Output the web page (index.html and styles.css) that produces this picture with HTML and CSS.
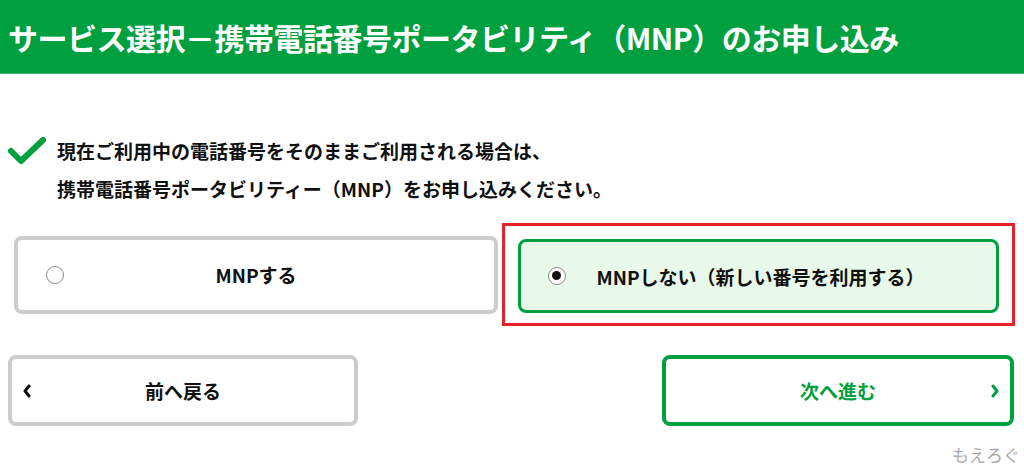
FILE: index.html
```html
<!DOCTYPE html>
<html lang="ja">
<head>
    <meta charset="UTF-8">
    <meta name="viewport" content="width=device-width, initial-scale=1.0">
    <title>サービス選択</title>
    <link rel="stylesheet" href="styles.css">
</head>
<body>
    <header class="page-head">
        <h1>サービス選択－携帯電話番号ポータビリティ（MNP）のお申し込み</h1>
    </header>

    <section class="notice">
        <svg class="notice-check" width="38" height="30" viewBox="0 0 38 30">
            <polyline points="3,14 13,24 35,3" fill="none" stroke="#00a040" stroke-width="6" stroke-linecap="round" stroke-linejoin="round"/>
        </svg>
        <p class="notice-text">
            現在ご利用中の電話番号をそのままご利用される場合は、<br>
            携帯電話番号ポータビリティー（MNP）をお申し込みください。
        </p>
    </section>

    <section class="options">
        <label class="option">
            <span class="radio"></span>
            <span class="option-label">MNPする</span>
        </label>
        <div class="highlight">
            <label class="option selected">
                <span class="radio checked"></span>
                <span class="option-label">MNPしない（新しい番号を利用する）</span>
            </label>
        </div>
    </section>

    <nav class="steps">
        <button class="step back">
            <svg class="chev" width="10" height="14" viewBox="0 0 10 14">
                <polyline points="7,2 3,7 7,12" fill="none" stroke="#111" stroke-width="3" stroke-linecap="round" stroke-linejoin="round"/>
            </svg>
            <span>前へ戻る</span>
        </button>
        <button class="step next">
            <span>次へ進む</span>
            <svg class="chev" width="10" height="14" viewBox="0 0 10 14">
                <polyline points="3,2 7,7 3,12" fill="none" stroke="#00a040" stroke-width="3" stroke-linecap="round" stroke-linejoin="round"/>
            </svg>
        </button>
    </nav>

    <div class="watermark">もえろぐ</div>
</body>
</html>
```

FILE: styles.css
```css
* {
    margin: 0;
    padding: 0;
    box-sizing: border-box;
}

body {
    font-family: 'Noto Sans CJK JP', 'Noto Sans', sans-serif;
    color: #111;
    background: #fff;
    width: 1024px;
    height: 469px;
    overflow: hidden;
    position: relative;
}

.page-head {
    height: 74px;
    background: #00a040;
    border-bottom: 1px solid #3dbb6a;
    display: flex;
    align-items: center;
    padding: 0 8px;
}

.page-head h1 {
    color: #fff;
    font-size: 30px;
    font-weight: 700;
    letter-spacing: -0.5px;
    line-height: 1;
}

.notice {
    display: flex;
    align-items: flex-start;
    padding: 58px 0 0 8px;
}

.notice-check {
    margin-top: 5px;
    width: 38px;
    flex-shrink: 0;
}

.notice-text {
    margin-left: 11px;
    font-size: 19px;
    font-weight: 700;
    line-height: 38px;
}

.options {
    display: flex;
    align-items: center;
    padding-left: 14px;
    margin-top: 15px;
    gap: 4px;
}

.option {
    display: flex;
    align-items: center;
    position: relative;
    width: 484px;
    height: 78px;
    border: 4px solid #cccccc;
    border-radius: 8px;
    background: #fff;
}

.option-label {
    flex: 1;
    text-align: center;
    font-size: 19px;
    font-weight: 700;
}

.radio {
    position: absolute;
    left: 28px;
    top: 50%;
    margin-top: -9px;
    width: 18px;
    height: 18px;
    border: 1.5px solid #8a8a8a;
    border-radius: 50%;
    background: #fff;
}

.radio.checked::after {
    content: '';
    position: absolute;
    left: 3px;
    top: 3px;
    width: 9px;
    height: 9px;
    border-radius: 50%;
    background: #111;
}

.highlight {
    border: 3px solid #e8202a;
    padding: 13px 13px 10px 13px;
}

.option.selected {
    width: 481px;
    height: 74px;
    border: 3px solid #00a040;
    background: #e8f9ea;
}

.option.selected .radio {
    left: 27px;
}

.option.selected .option-label {
    padding-left: 4px;
}

.steps {
    display: flex;
    justify-content: space-between;
    padding: 0 10px 0 8px;
    margin-top: 29px;
}

.step {
    display: flex;
    align-items: center;
    position: relative;
    width: 350px;
    height: 71px;
    border-radius: 8px;
    background: #fff;
    font-family: inherit;
    font-size: 19px;
    font-weight: 700;
    cursor: pointer;
}

.step span {
    flex: 1;
    text-align: center;
}

.step .chev {
    position: absolute;
    top: 50%;
    margin-top: -7px;
}

.back {
    border: 4px solid #cccccc;
    color: #111;
}

.back .chev {
    left: 10px;
}

.next {
    width: 352px;
    border: 4px solid #00a040;
    color: #00a040;
}

.next .chev {
    right: 10px;
}

.watermark {
    position: absolute;
    right: 4px;
    bottom: 2px;
    font-size: 17px;
    color: #a8a8a8;
}
```
